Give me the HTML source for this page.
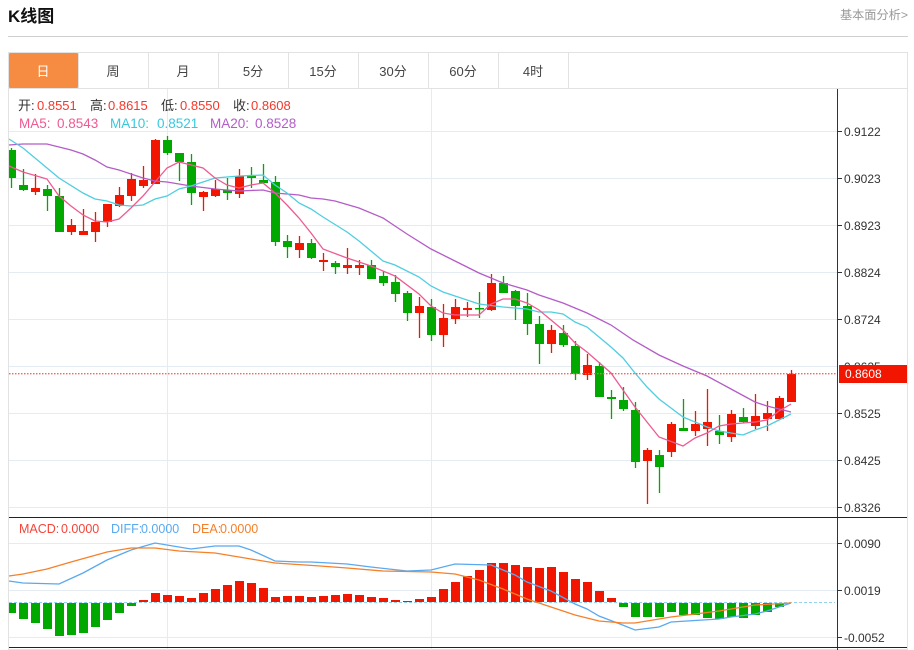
<!DOCTYPE html>
<html lang="zh-CN">
<head>
<meta charset="utf-8">
<title>K线图</title>
<style>
html,body{margin:0;padding:0;background:#fff;width:914px;height:650px;overflow:hidden}
svg{display:block;font-family:"Liberation Sans","Noto Sans CJK SC",sans-serif}
</style>
</head>
<body>
<svg width="914" height="650" viewBox="0 0 914 650" xmlns="http://www.w3.org/2000/svg">
<!-- header -->
<text x="8" y="22" font-size="17" font-weight="700" fill="#111">K线图</text>
<text x="908" y="19" font-size="12.2" fill="#999" text-anchor="end">基本面分析&gt;</text>
<rect x="8" y="36" width="900" height="1" fill="#cfcfcf"/>
<!-- frame -->
<rect x="8.5" y="52.5" width="899" height="597" fill="none" stroke="#e2e2e2"/>
<rect x="9" y="88" width="898" height="1" fill="#e2e2e2"/>
<!-- tabs -->
<rect x="9" y="53" width="69" height="35" rx="1" fill="#f58c41"/>
<path d="M78.5 53V88M148.5 53V88M218.5 53V88M288.5 53V88M358.5 53V88M428.5 53V88M498.5 53V88M568.5 53V88" stroke="#e2e2e2"/>
<g font-size="13" fill="#444" text-anchor="middle">
<text x="43" y="76" fill="#fff">日</text>
<text x="113" y="76">周</text>
<text x="183" y="76">月</text>
<text x="253" y="76">5分</text>
<text x="323" y="76">15分</text>
<text x="393" y="76">30分</text>
<text x="463" y="76">60分</text>
<text x="533" y="76">4时</text>
</g>
<!-- grid -->
<path d="M9 131.5H837M9 178.5H837M9 225.5H837M9 272.5H837M9 319.5H837M9 366.5H837M9 413.5H837M9 460.5H837M9 507.5H837M9 543.5H837M9 590.5H837M9 637.5H837M167.5 89V650M431.5 89V650" stroke="#e4ecf2" fill="none"/>
<!-- candle wicks -->
<path fill="none" stroke="#f21500" stroke-width="1.3" d="M35.5 174V195M71.5 219V235M83.5 209V235M95.5 212V242M107.5 204V227M119.5 187V207M131.5 173V201M143.5 166V188M155.5 139V184M203.5 191V211M215.5 180V197M239.5 169V198M299.5 236V258M323.5 253V271M347.5 248V274M359.5 260V275M419.5 297V338M443.5 304V347M455.5 299V324M467.5 302V317M491.5 274V311M551.5 325V353M587.5 354V380M647.5 448V504M671.5 422V457M695.5 411V436M707.5 389V446M731.5 410V442M755.5 394V429M767.5 401V431M779.5 396V419M791.5 370V402"/>
<path fill="none" stroke="#00a800" stroke-width="1.3" d="M11.5 148V188M23.5 169V191M47.5 185V211M59.5 188V232M167.5 136V155M179.5 153V181M191.5 154V205M227.5 178V200M251.5 167V188M263.5 164V184M275.5 176V246M287.5 235V258M311.5 239V259M335.5 261V274M371.5 260V279M383.5 271V286M395.5 275V302M407.5 291V321M431.5 299V341M479.5 292V318M503.5 276V293M515.5 290V320M527.5 293V335M539.5 316V364M563.5 325V347M575.5 341V380M599.5 362V397M611.5 390V419M623.5 387V411M635.5 402V468M659.5 450V493M683.5 399V431M719.5 415V444M743.5 408V423"/>
<!-- candle bodies -->
<path fill="#f21500" d="M31 188h9V192h-9zM67 225h9V232h-9zM79 231h9V235h-9zM91 222h9V232h-9zM103 204h9V222h-9zM115 195h9V206h-9zM127 179h9V196h-9zM139 180h9V186h-9zM151 140h9V184h-9zM199 192h9V197h-9zM211 189h9V196h-9zM235 176h9V194h-9zM295 243h9V250h-9zM319 260h9V262h-9zM343 265h9V268h-9zM355 265h9V268h-9zM415 306h9V313h-9zM439 318h9V335h-9zM451 307h9V319h-9zM463 308h9V310h-9zM487 283h9V310h-9zM547 330h9V344h-9zM583 365h9V375h-9zM643 450h9V461h-9zM667 424h9V452h-9zM691 424h9V431h-9zM703 422h9V429h-9zM727 414h9V437h-9zM751 416h9V426h-9zM763 413h9V419h-9zM775 398h9V419h-9zM787 374h9V402h-9z"/>
<path fill="#00a800" d="M9 150h7V178h-7zM19 185h9V190h-9zM43 189h9V196h-9zM55 196h9V232h-9zM163 140h9V153h-9zM175 153h9V162h-9zM187 162h9V193h-9zM223 190h9V193h-9zM247 176h9V178h-9zM259 180h9V183h-9zM271 182h9V242h-9zM283 241h9V247h-9zM307 243h9V258h-9zM331 263h9V267h-9zM367 265h9V279h-9zM379 276h9V283h-9zM391 282h9V294h-9zM403 293h9V313h-9zM427 307h9V335h-9zM475 308h9V309.5h-9zM499 283h9V293h-9zM511 291h9V306h-9zM523 306h9V324h-9zM535 324h9V344h-9zM559 333h9V345h-9zM571 346h9V374h-9zM595 366h9V397h-9zM607 397h9V399h-9zM619 400h9V409h-9zM631 410h9V462h-9zM655 455h9V467h-9zM679 428h9V431h-9zM715 431h9V435h-9zM739 417h9V422h-9z"/>
<!-- MA lines -->
<path fill="none" stroke="#b45cc8" stroke-width="1.3" d="M9 145L23 144L47 144L71 150L83 154L95 160L107 167L119 170L143 178L155 181L167 182L191 186L215 189L239 191L263 190L275 193L299 195L311 198L323 199L335 201L359 208L383 218L395 226L407 234L431 249L455 261L467 267L479 273L491 278L503 283L527 290L539 295L563 303L587 313L611 325L633 340L659 355L683 366L707 376L731 389L755 402L767 406L779 409L791 412"/>
<path fill="none" stroke="#4fcee0" stroke-width="1.3" d="M9 139L23 148L47 168L59 178L83 193L95 199L107 201L119 205L131 206L143 205L155 199L167 196L179 189L191 186L203 182L215 178L227 177L239 176L263 175L275 185L287 193L299 203L311 209L323 217L347 232L359 241L383 261L395 265L419 277L431 286L443 292L455 296L479 304L503 307L515 308L527 309L539 312L551 312L563 314L575 322L587 327L599 337L611 347L623 358L635 373L647 387L659 399L671 408L683 417L695 422L707 427L719 431L731 433L743 435L755 430L767 426L779 420L791 414"/>
<path fill="none" stroke="#ee5a92" stroke-width="1.3" d="M9 166L23 172L47 179L59 196L71 206L83 215L95 221L107 222L119 219L131 208L143 196L155 182L167 168L179 162L203 168L215 178L227 185L239 188L251 185L263 183L275 193L287 205L299 218L311 233L323 249L347 258L371 266L395 276L419 294L431 306L443 313L455 315L479 315L491 304L503 299L515 299L527 303L539 310L551 320L563 330L575 343L587 352L611 373L623 390L635 407L647 422L659 437L683 446L695 438L707 433L719 426L731 424L743 423L755 422L767 420L779 411L791 404"/>
<!-- last price -->
<path d="M9 373.7H837" stroke="#f8645a" stroke-width="1.4" stroke-dasharray="1.5 1.5" fill="none"/>
<!-- axis -->
<path d="M837.5 89V650" stroke="#333" fill="none"/>
<path d="M9 517.5H907M9 647.5H907" stroke="#222" fill="none"/>
<path d="M837 131.5h5M837 178.5h5M837 225.5h5M837 272.5h5M837 319.5h5M837 413.5h5M837 460.5h5M837 507.5h5M837 543.5h5M837 590.5h5M837 637.5h5" stroke="#333" fill="none"/>
<g font-size="12" fill="#333">
<text x="844" y="136">0.9122</text>
<text x="844" y="183">0.9023</text>
<text x="844" y="230">0.8923</text>
<text x="844" y="277">0.8824</text>
<text x="844" y="324">0.8724</text>
<text x="844" y="371">0.8625</text>
<text x="844" y="418">0.8525</text>
<text x="844" y="465">0.8425</text>
<text x="844" y="512">0.8326</text>
<text x="844" y="548">0.0090</text>
<text x="844" y="595">0.0019</text>
<text x="844" y="642">-0.0052</text>
</g>
<rect x="839" y="365" width="68" height="18" fill="#f21500"/>
<text x="845" y="378" font-size="12" fill="#fff">0.8608</text>
<!-- legends -->
<g font-size="13">
<text x="18" y="110" fill="#333">开:</text><text x="37" y="110" fill="#f5372a">0.8551</text>
<text x="90" y="110" fill="#333">高:</text><text x="108" y="110" fill="#f5372a">0.8615</text>
<text x="161" y="110" fill="#333">低:</text><text x="180" y="110" fill="#f5372a">0.8550</text>
<text x="233" y="110" fill="#333">收:</text><text x="251" y="110" fill="#f5372a">0.8608</text>
</g>
<g font-size="13.5">
<text x="19" y="128" fill="#ee5a92">MA5:</text><text x="57" y="128" fill="#ee5a92">0.8543</text>
<text x="110" y="128" fill="#38c8de">MA10:</text><text x="157" y="128" fill="#38c8de">0.8521</text>
<text x="210" y="128" fill="#b45cc8">MA20:</text><text x="255" y="128" fill="#b45cc8">0.8528</text>
</g>
<g font-size="12.5">
<text x="19" y="533" fill="#f5453a">MACD:</text><text x="61" y="533" fill="#f5453a">0.0000</text>
<text x="111" y="533" fill="#5aa9f0">DIFF:</text><text x="141" y="533" fill="#5aa9f0">0.0000</text>
<text x="192" y="533" fill="#f5802a">DEA:</text><text x="220" y="533" fill="#f5802a">0.0000</text>
</g>
<!-- MACD -->
<path d="M9 602.5H835" stroke="#8fd3ef" stroke-dasharray="3 2" fill="none"/>
<path fill="#f21500" d="M139 600h9V602h-9zM151 593h9V602h-9zM163 595h9V602h-9zM175 596h9V602h-9zM187 598h9V602h-9zM199 593h9V602h-9zM211 589h9V602h-9zM223 585h9V602h-9zM235 581h9V602h-9zM247 583h9V602h-9zM259 588h9V602h-9zM271 597h9V602h-9zM283 596h9V602h-9zM295 596h9V602h-9zM307 597h9V602h-9zM319 596h9V602h-9zM331 595h9V602h-9zM343 594h9V602h-9zM355 595h9V602h-9zM367 597h9V602h-9zM379 598h9V602h-9zM391 600h9V602h-9zM403 601h9V602h-9zM415 599h9V602h-9zM427 597h9V602h-9zM439 589h9V602h-9zM451 582h9V602h-9zM463 576h9V602h-9zM475 570h9V602h-9zM487 563h9V602h-9zM499 563h9V602h-9zM511 565h9V602h-9zM523 567h9V602h-9zM535 568h9V602h-9zM547 567h9V602h-9zM559 572h9V602h-9zM571 579h9V602h-9zM583 582h9V602h-9zM595 591h9V602h-9zM607 598h9V602h-9z"/>
<path fill="#00a800" d="M9 603h7V613h-7zM19 603h9V619h-9zM31 603h9V623h-9zM43 603h9V629h-9zM55 603h9V636h-9zM67 603h9V635h-9zM79 603h9V633h-9zM91 603h9V627h-9zM103 603h9V620h-9zM115 603h9V613h-9zM127 603h9V606h-9zM619 603h9V607h-9zM631 603h9V617h-9zM643 603h9V617h-9zM655 603h9V617h-9zM667 603h9V612h-9zM679 603h9V615h-9zM691 603h9V615h-9zM703 603h9V618h-9zM715 603h9V619h-9zM727 603h9V617h-9zM739 603h9V618h-9zM751 603h9V615h-9zM763 603h9V612h-9zM775 603h9V607h-9z"/>
<path fill="none" stroke="#5aa9f0" stroke-width="1.3" d="M9 581L23 583L59 584L83 573L107 560L131 550L155 543L191 549L215 546L239 546L251 550L275 561L299 562L311 562L347 564L371 567L407 571L431 570L455 564L491 565L515 575L527 582L551 591L575 604L587 609L599 616L620 624L635 630L659 627L671 622L719 619L731 617L755 614L767 611L779 607L791 603"/>
<path fill="none" stroke="#f5802a" stroke-width="1.3" d="M9 576L23 574L47 569L71 562L107 552L131 548L155 548L179 551L215 553L251 559L275 563L320 566L347 568L383 571L431 572L455 574L479 580L503 589L527 599L551 607L575 615L599 621L623 623L635 623L671 617L719 611L755 605L791 603"/>
</svg>
</body>
</html>
